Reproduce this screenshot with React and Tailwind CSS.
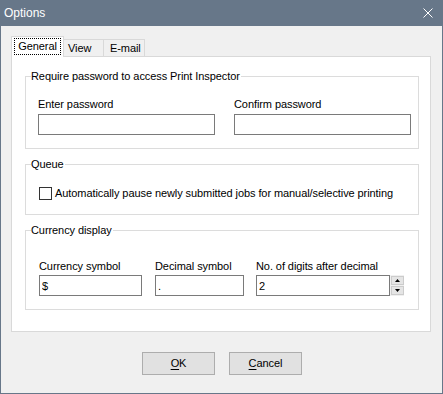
import React from "react";

export default function App() {
    return (
        <div className="w-[443px] h-[394px] bg-[#677789] flex flex-col font-['Liberation_Sans',Arial,sans-serif] text-[11px] text-black">
            {/* Title bar */}
            <div className="h-[26px] flex items-center justify-between pl-[4px] pr-[10px] text-white text-[12px]">
                <span>Options</span>
                <svg width="10" height="10" viewBox="0 0 10 10">
                    <path d="M0.5 0.5 L9.5 9.5 M9.5 0.5 L0.5 9.5" stroke="#ffffff" strokeWidth="1" fill="none" />
                </svg>
            </div>

            <div className="flex-1 mx-px mb-px bg-[#f0f0f0] pt-[10px] pl-[10px] flex flex-col tracking-[-0.08px]">
                {/* Tabs */}
                <div className="flex items-end h-[20px]">
                    <div className="relative z-10 w-[53px] h-[21px] -mb-px bg-white border border-b-0 border-[#d9d9d9] flex items-start justify-center pt-[1px]">
                        <span className="border border-dotted border-black px-[3px] leading-[15px]">General</span>
                    </div>
                    <div className="w-[40px] h-[17px] bg-[#f0f0f0] border-t border-r border-[#d9d9d9] pl-[4px] leading-[16px]">View</div>
                    <div className="w-[41px] h-[17px] bg-[#f0f0f0] border-t border-r border-[#d9d9d9] pl-[6px] leading-[16px]">E-mail</div>
                </div>

                {/* Tab panel */}
                <div className="w-[420px] h-[276px] bg-white border border-[#d9d9d9] pt-[12px]">
                    {/* Password */}
                    <fieldset className="ml-[13px] w-[394px] border border-[#dcdcdc]">
                        <legend className="ml-[5px] pr-px leading-[15px]">Require password to access Print Inspector</legend>
                        <div className="flex gap-[19px] pl-[12px] pt-[13px] pb-[13px]">
                            <div className="flex flex-col gap-[2px]">
                                <label className="leading-[15px]">Enter password</label>
                                <input type="password" className="w-[177px] h-[21px] border border-[#7a7a7a] bg-white outline-none" />
                            </div>
                            <div className="flex flex-col gap-[2px]">
                                <label className="leading-[15px]">Confirm password</label>
                                <input type="password" className="w-[177px] h-[21px] border border-[#7a7a7a] bg-white outline-none" />
                            </div>
                        </div>
                    </fieldset>

                    {/* Queue */}
                    <fieldset className="ml-[13px] mt-[8px] w-[394px] border border-[#dcdcdc]">
                        <legend className="ml-[5px] pr-px leading-[15px]">Queue</legend>
                        <div className="flex items-center h-[15px] box-content pl-[13px] pt-[14px] pb-[13px]">
                            <input type="checkbox" className="appearance-none m-0 w-[13px] h-[13px] border border-[#333333] bg-white" />
                            <span className="ml-[3px] leading-[15px]">Automatically pause newly submitted jobs for manual/selective printing</span>
                        </div>
                    </fieldset>

                    {/* Currency */}
                    <fieldset className="ml-[13px] mt-[8px] w-[394px] border border-[#dcdcdc]">
                        <legend className="ml-[5px] pr-px leading-[15px]">Currency display</legend>
                        <div className="flex pl-[13px] pt-[21px] pb-[13px]">
                            <div className="flex flex-col gap-[1px]">
                                <label className="leading-[15px]">Currency symbol</label>
                                <input defaultValue="$" className="w-[103px] h-[21px] border border-[#7a7a7a] bg-white px-[2px] outline-none" />
                            </div>
                            <div className="ml-[13px] flex flex-col gap-[1px]">
                                <label className="leading-[15px]">Decimal symbol</label>
                                <input defaultValue="." className="w-[89px] h-[21px] border border-[#7a7a7a] bg-white px-[2px] outline-none" />
                            </div>
                            <div className="ml-[12px] flex flex-col gap-[1px]">
                                <label className="leading-[15px]">No. of digits after decimal</label>
                                <div className="flex">
                                    <input defaultValue="2" className="w-[134px] h-[21px] border border-[#7a7a7a] bg-white px-[2px] outline-none" />
                                    <div className="w-[14px] h-[21px] bg-[#f0f0f0] flex flex-col gap-px pl-px py-[1px]">
                                        <div className="flex-1 bg-[#e5e5e5] border border-[#cccccc] flex items-center justify-center">
                                            <svg width="5" height="3" viewBox="0 0 5 3"><polygon points="2.5,0 5,3 0,3" fill="#000000" /></svg>
                                        </div>
                                        <div className="flex-1 bg-[#e5e5e5] border border-[#cccccc] flex items-center justify-center">
                                            <svg width="5" height="3" viewBox="0 0 5 3"><polygon points="0,0 5,0 2.5,3" fill="#000000" /></svg>
                                        </div>
                                    </div>
                                </div>
                            </div>
                        </div>
                    </fieldset>
                </div>

                {/* Buttons */}
                <div className="flex gap-[14px] ml-[131px] mt-[20px]">
                    <button className="w-[73px] h-[23px] bg-[#e1e1e1] border border-[#adadad] text-center">
                        <span className="underline underline-offset-2">O</span>K
                    </button>
                    <button className="w-[73px] h-[23px] bg-[#e1e1e1] border border-[#adadad] text-center">
                        <span className="underline underline-offset-2">C</span>ancel
                    </button>
                </div>
            </div>
        </div>
    );
}
